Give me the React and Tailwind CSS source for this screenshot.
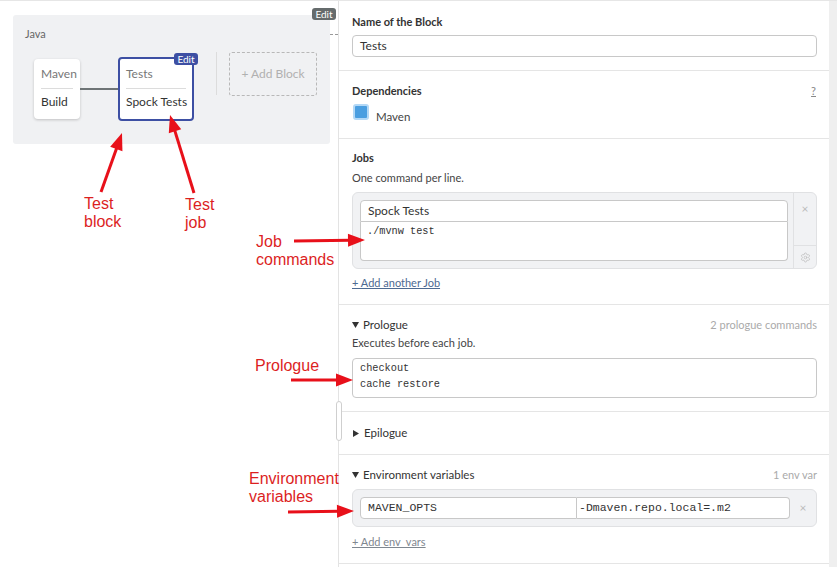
import React from 'react';
import { Settings } from 'lucide-react';

const mono = "font-['Liberation_Mono',monospace]";

function Arrow({ x1, y1, x2, y2 }) {
  // line with a filled head at (x2, y2)
  const dx = x2 - x1;
  const dy = y2 - y1;
  const len = Math.sqrt(dx * dx + dy * dy);
  const ux = dx / len;
  const uy = dy / len;
  const hl = 17;
  const hw = 6.5;
  const bx = x2 - ux * hl;
  const by = y2 - uy * hl;
  const pts = [
    `${x2},${y2}`,
    `${bx - uy * hw},${by + ux * hw}`,
    `${bx + uy * hw},${by - ux * hw}`,
  ].join(' ');
  return (
    <g>
      <line x1={x1} y1={y1} x2={bx + ux * 2} y2={by + uy * 2} stroke="#e8101a" strokeWidth="3" />
      <polygon points={pts} fill="#e8101a" />
    </g>
  );
}

function Note({ className, children }) {
  return (
    <div className={`absolute text-[16px] leading-[18px] text-[#dc1f1f] font-['Liberation_Sans',Arial,sans-serif] ${className}`}>
      {children}
    </div>
  );
}

function Caret({ open }) {
  return open ? (
    <svg width="7" height="6" viewBox="0 0 7 6" className="mr-[4px]">
      <polygon points="0,0 7,0 3.5,6" fill="#333" />
    </svg>
  ) : (
    <svg width="6" height="7" viewBox="0 0 6 7" className="mr-[5px] ml-[1px]">
      <polygon points="0,0 6,3.5 0,7" fill="#333" />
    </svg>
  );
}

export default function App() {
  return (
    <div className="relative w-[837px] h-[567px] overflow-hidden bg-white border-t border-[#e6e6e6] flex font-['Lato',sans-serif] text-[#333]">
      {/* workflow canvas */}
      <div className="w-[338px] shrink-0 pt-[14px] pl-[13px]">
        <div className="relative w-[317px] h-[129px] bg-[#f0f1f3] rounded-[3px] pt-[12px] pl-[12px]">
          <div className="text-[11px] leading-[14px] text-[#666]">Java</div>
          <div className="flex items-start mt-[11px]">
            <div className="ml-[9px] mt-[7px] w-[46px] h-[60px] bg-white rounded-[4px] shadow-[0_1px_3px_rgba(0,0,0,0.2)] px-[7px]">
              <div className="h-[30px] flex items-center text-[12px] text-[#777] border-b border-[#dcdcdc]">Maven</div>
              <div className="h-[26px] flex items-center text-[12px] text-[#333]">Build</div>
            </div>
            <div className="mt-[36px] w-[38px] h-[2px] bg-[#6e7476]" />
            <div className="relative mt-[5px] w-[76px] h-[64px] bg-white border-2 border-[#3d4fa3] rounded-[4px] px-[6px]">
              <div className="absolute -top-[6px] -right-[6px] w-[24px] h-[12px] bg-[#3d4fa3] rounded-[3px] text-white text-[10px] leading-[12px] text-center">Edit</div>
              <div className="h-[30px] flex items-center text-[12px] text-[#777] border-b border-[#dcdcdc]">Tests</div>
              <div className="h-[26px] flex items-center text-[12px] text-[#333] whitespace-nowrap">Spock Tests</div>
            </div>
            <div className="ml-[22px] w-px h-[43px] bg-[#dcdcdc]" />
            <div className="ml-[12px] w-[88px] h-[44px] border border-dashed border-[#b8b8b8] rounded-[3px] flex items-center justify-center text-[12px] text-[#b0b0b0]">
              + Add Block
            </div>
          </div>
          <div className="absolute -top-[7px] -right-[6px] w-[24px] h-[12px] bg-[#656b6c] rounded-[3px] text-white text-[10px] leading-[12px] text-center">Edit</div>
          <div className="absolute left-[317px] top-[19px] w-[8px] border-t border-dashed border-[#999]" />
        </div>
      </div>

      {/* block editor */}
      <div className="w-[491px] shrink-0 border-l border-[#e3e3e3] text-[11px] leading-[14px]">
        <div className="pt-[14px] pb-[13px] pl-[13px] pr-[12px] border-b border-[#e5e5e5]">
          <div className="font-bold text-[#333]">Name of the Block</div>
          <div className="mt-[6px] h-[22px] border border-[#c8c8c8] rounded-[4px] px-[7px] flex items-center text-[12px]">Tests</div>
        </div>

        <div className="pt-[13px] pb-[14px] pl-[13px] pr-[12px] border-b border-[#e5e5e5]">
          <div className="flex justify-between">
            <span className="font-bold">Dependencies</span>
            <span className="underline text-[#888] mr-[1px]">?</span>
          </div>
          <div className="flex items-start mt-[6px]">
            <div className="ml-[1px] w-[16px] h-[16px] rounded-[3px] border-2 border-[#b3d8f6] bg-[#4a9ee0]" />
            <span className="ml-[7px] mt-[6px] text-[11.5px] text-[#444]">Maven</span>
          </div>
        </div>

        <div className="pt-[12px] pb-[14px] pl-[13px] pr-[12px] border-b border-[#e5e5e5]">
          <div className="font-bold">Jobs</div>
          <div className="mt-[6px] text-[#444]">One command per line.</div>
          <div className="mt-[7px] h-[77px] flex border border-[#e0e1e3] bg-[#f1f2f4] rounded-[6px]">
            <div className="flex-1 pl-[7px] pt-[7px] pr-[5px]">
              <div className="h-[22px] border border-[#c8c8c8] rounded-t-[4px] bg-white px-[7px] flex items-center text-[12px]">Spock Tests</div>
              <div className={`h-[39px] border border-t-0 border-[#c8c8c8] rounded-b-[4px] bg-white px-[6px] pt-[1px] text-[10.25px] leading-[16px] text-[#333] ${mono}`}>./mvnw test</div>
            </div>
            <div className="w-[23px] border-l border-[#e0e1e3] flex flex-col">
              <div className="flex-1 flex justify-center pt-[10px] text-[12px] leading-[12px] text-[#bbb]">×</div>
              <div className="h-[23px] border-t border-[#e0e1e3] flex items-center justify-center">
                <Settings size={11} color="#bbb" strokeWidth={1.5} />
              </div>
            </div>
          </div>
          <div className="mt-[7px] text-[#4d6a92] underline">+ Add another Job</div>
        </div>

        <div className="pt-[13px] pb-[13px] pl-[13px] pr-[12px] border-b border-[#e5e5e5]">
          <div className="flex justify-between items-center">
            <div className="flex items-center text-[11.5px]">
              <Caret open />
              Prologue
            </div>
            <span className="text-[#aaa]">2 prologue commands</span>
          </div>
          <div className="mt-[4px] text-[#444]">Executes before each job.</div>
          <div className={`mt-[8px] h-[40px] border border-[#c8c8c8] rounded-[4px] px-[7px] pt-[1px] text-[10.25px] leading-[16px] text-[#333] ${mono}`}>
            <div>checkout</div>
            <div>cache restore</div>
          </div>
        </div>

        <div className="pt-[14px] pb-[14px] pl-[13px] pr-[12px] border-b border-[#e5e5e5]">
          <div className="flex items-center text-[11.5px]">
            <Caret />
            Epilogue
          </div>
        </div>

        <div className="pt-[13px] pb-[14px] pl-[13px] pr-[12px] border-b border-[#e5e5e5]">
          <div className="flex justify-between items-center">
            <div className="flex items-center text-[11.5px]">
              <Caret open />
              Environment variables
            </div>
            <span className="text-[#aaa]">1 env var</span>
          </div>
          <div className="mt-[7px] h-[38px] flex items-center border border-[#e0e1e3] bg-[#f1f2f4] rounded-[6px] pl-[7px]">
            <div className={`w-[217px] h-[22px] border border-[#c8c8c8] rounded-l-[4px] bg-white px-[7px] flex items-center text-[11.5px] ${mono}`}>MAVEN_OPTS</div>
            <div className={`w-[213px] h-[22px] border border-l-0 border-[#c8c8c8] rounded-r-[4px] bg-white px-[2px] flex items-center text-[11.5px] ${mono}`}>-Dmaven.repo.local=.m2</div>
            <div className="flex-1 text-center text-[12px] text-[#bbb]">×</div>
          </div>
          <div className="mt-[8px] text-[#7f8790] underline">+ Add env_vars</div>
        </div>
      </div>

      <div className="w-[8px] shrink-0 bg-[#efefef]" />

      {/* panel resize handle */}
      <div className="absolute left-[336px] top-[400px] w-[6px] h-[40px] rounded-full border border-[#cfcfcf] bg-white" />

      {/* annotations */}
      <svg className="absolute left-0 top-0 pointer-events-none" width="837" height="567">
        <Arrow x1={101} y1={191} x2={122} y2={132} />
        <Arrow x1={194} y1={192} x2={170} y2={114} />
        <Arrow x1={294} y1={240} x2={365} y2={239} />
        <Arrow x1={291} y1={379} x2={353} y2={379} />
        <Arrow x1={288} y1={511} x2={354} y2={510} />
      </svg>
      <Note className="left-[84px] top-[194px]">Test<br />block</Note>
      <Note className="left-[185px] top-[195px]">Test<br />job</Note>
      <Note className="left-[256px] top-[232px]">Job<br />commands</Note>
      <Note className="left-[255px] top-[356px]">Prologue</Note>
      <Note className="left-[249px] top-[469px]">Environment<br />variables</Note>
    </div>
  );
}
